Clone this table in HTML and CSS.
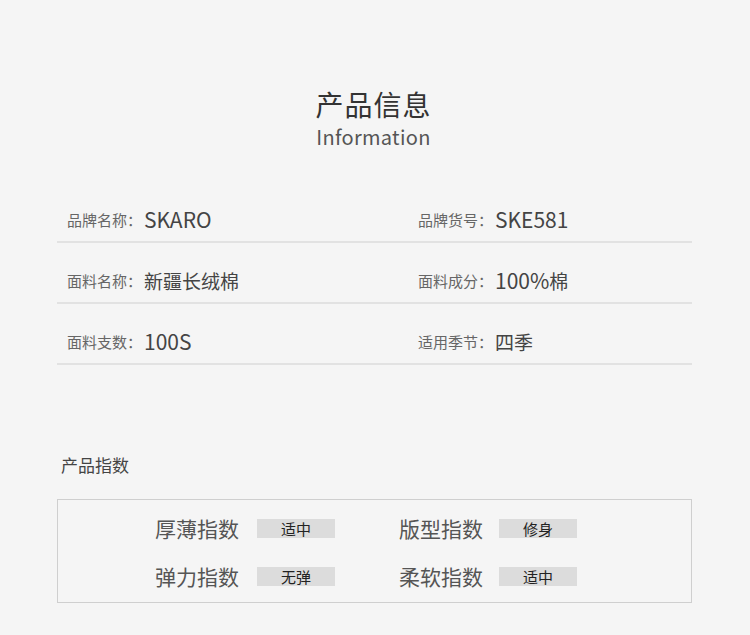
FILE: index.html
```html
<!DOCTYPE html>
<html lang="zh-CN">
<head>
<meta charset="utf-8">
<link rel="stylesheet" href="styles.css">
</head>
<body>
<div class="page">
  <header class="head">
    <h1 class="title">产品信息</h1>
    <div class="sub">Information</div>
  </header>
  <section class="info">
    <div class="row">
      <div class="cell"><span class="lbl">品牌名称：</span><span class="val">SKARO</span></div>
      <div class="cell"><span class="lbl">品牌货号：</span><span class="val">SKE581</span></div>
    </div>
    <div class="row">
      <div class="cell"><span class="lbl">面料名称：</span><span class="val cn">新疆长绒棉</span></div>
      <div class="cell"><span class="lbl">面料成分：</span><span class="val">100%<span class="cn">棉</span></span></div>
    </div>
    <div class="row">
      <div class="cell"><span class="lbl">面料支数：</span><span class="val">100S</span></div>
      <div class="cell"><span class="lbl">适用季节：</span><span class="val cn">四季</span></div>
    </div>
  </section>
  <h2 class="sec">产品指数</h2>
  <section class="box">
    <div class="irow">
      <div class="grp"><span class="ilbl">厚薄指数</span><span class="badge">适中</span></div>
      <div class="grp"><span class="ilbl">版型指数</span><span class="badge">修身</span></div>
    </div>
    <div class="irow">
      <div class="grp"><span class="ilbl">弹力指数</span><span class="badge">无弹</span></div>
      <div class="grp"><span class="ilbl">柔软指数</span><span class="badge">适中</span></div>
    </div>
  </section>
</div>
</body>
</html>
```
FILE: styles.css
```css
html, body {
  margin: 0;
  padding: 0;
  background: #f5f5f5;
}
body {
  font-family: "Noto Sans CJK SC", "Noto Sans", sans-serif;
  color: #444;
  width: 750px;
  height: 635px;
  overflow: hidden;
}
.page {
  width: 635px;
  margin-left: 57px;
  padding-top: 84px;
}
.head {
  text-align: center;
  margin-left: -2px;
}
.title {
  margin: 0;
  font-size: 28px;
  font-weight: 400;
  line-height: 40px;
  color: #333;
  letter-spacing: 1px;
}
.sub {
  font-size: 20px;
  line-height: 26px;
  color: #555;
  margin-top: 0;
  letter-spacing: 0.3px;
}
.info {
  margin-top: 34px;
}
.row {
  display: flex;
  height: 59px;
  box-sizing: content-box;
  border-bottom: 2px solid #e2e2e2;
  align-items: flex-end;
}
.row:first-child {
  height: 57px;
}
.cell {
  display: flex;
  align-items: center;
  height: 30px;
  padding-bottom: 7px;
}
.cell:first-child {
  width: 351px;
  padding-left: 10px;
}
.lbl {
  font-size: 15px;
  color: #666;
}
.val {
  font-size: 21px;
  color: #444;
  margin-left: 2px;
}
.cn {
  font-size: 19px;
}
.sec {
  margin: 0;
  margin-top: 88px;
  margin-left: 4px;
  font-size: 17px;
  font-weight: 400;
  line-height: 24px;
  color: #444;
}
.box {
  margin-top: 22px;
  border: 1.5px solid #cfcfcf;
  height: 104px;
  padding-top: 4px;
  box-sizing: border-box;
  padding-left: 97px;
}
.irow {
  display: flex;
  height: 48px;
  align-items: center;
}
.grp {
  display: flex;
  align-items: center;
}
.grp + .grp {
  margin-left: 64px;
}
.ilbl {
  font-size: 21px;
  color: #555;
  width: 86px;
}
.badge {
  width: 78px;
  height: 19px;
  background: #dcdcdc;
  font-size: 15px;
  line-height: 19px;
  text-align: center;
  color: #222;
  margin-left: 16px;
}
.grp + .grp .badge {
  margin-left: 14px;
}
```
